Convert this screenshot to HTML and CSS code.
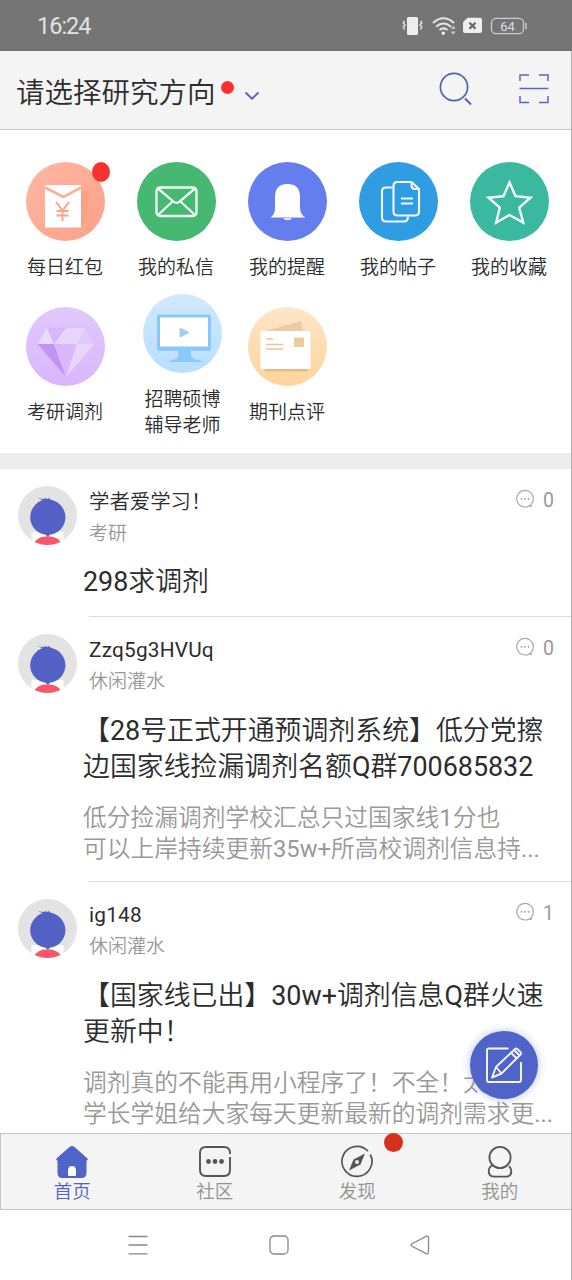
FILE: index.html
```html
<!DOCTYPE html>
<html lang="zh-CN">
<head>
<meta charset="utf-8">
<title>首页</title>
<link rel="stylesheet" href="styles.css">
</head>
<body>
<svg class="defs" width="0" height="0">
  <defs>
    <linearGradient id="g-red" x1="0" y1="0" x2="1" y2="1"><stop offset="0" stop-color="#ffb8a2"/><stop offset="1" stop-color="#ff9f88"/></linearGradient>
    <linearGradient id="g-purple" x1="0" y1="0" x2="0" y2="1"><stop offset="0" stop-color="#e0c9fd"/><stop offset="1" stop-color="#d8b6fb"/></linearGradient>
    <linearGradient id="g-blue" x1="0" y1="0" x2="0" y2="1"><stop offset="0" stop-color="#d0e9ff"/><stop offset="1" stop-color="#b8dfff"/></linearGradient>
    <linearGradient id="g-orange" x1="0" y1="0" x2="0" y2="1"><stop offset="0" stop-color="#fde6c9"/><stop offset="1" stop-color="#fed49b"/></linearGradient>
    <clipPath id="avatar-clip"><circle cx="29.5" cy="29.5" r="29.5"/></clipPath>
    <symbol id="avatar" viewBox="0 0 59 59">
      <g clip-path="url(#avatar-clip)">
        <rect width="59" height="59" fill="#e3e3e3"/>
        <path d="M13.500 46h32v13h-32z" fill="#fff"/>
        <circle cx="29.800" cy="31.200" r="17.600" fill="#5361c5"/>
        <path d="M19.500 12.500l8 .6-2-1.600 4.500 1.400.8-1.400.9 1.800 6 3-13 2-5.500-1.200 5.500-3.200z" fill="#5361c5"/>
        <path d="M27 48h5.500l-2.700 3z" fill="#5361c5"/>
        <path d="M16 57q3-5 9-6.200q5-1 10 .1q6 1.500 8 6.100v2H16z" fill="#f8566a"/>
      </g>
    </symbol>
    <symbol id="comment" viewBox="0 0 20 20">
      <path d="M14.200 16.900A8.300 8.300 0 1 0 10 18q2.300 0 4.200-1.100l2 .6-.4-2" fill="none" stroke="#aaa" stroke-width="1.200"/>
      <g fill="#999"><circle cx="6.500" cy="9.800" r=".9"/><circle cx="10" cy="9.800" r=".9"/><circle cx="13.500" cy="9.800" r=".9"/></g>
    </symbol>
  </defs>
</svg>

<div class="screen">
  <header class="status">
    <span class="clock">16:24</span>
    <svg width="126" height="24" viewBox="0 0 126 24">
      <g fill="#eee">
        <rect x="5" y="3" width="11" height="18" rx="1.500"/>
        <path d="M2.500 7l-1.200 2 1.700 2-1.700 2 1.200 2.500M18.500 7l1.200 2-1.700 2 1.700 2-1.200 2.500" fill="none" stroke="#ddd" stroke-width="1.600"/>
        <path d="M31 9Q41.500-.5 52 9M34 12.700q7.500-6.400 15 0M37.500 16q4-3.300 8 0" fill="none" stroke="#e4e4e4" stroke-width="2.100"/>
        <circle cx="41.300" cy="19.300" r="1.700"/>
        <path d="M48.700 14.700l2.500-3 2.500 3zm0 2.800h5l-2.500 3z" fill="#ccc"/>
        <path d="M65.500 3.800H78q2 0 2 2V17q0 2-2 2H63q-2 0-2-2V8.300z"/>
      </g>
      <path d="M67.500 8.700l6 6m0-6l-6 6" stroke="#666" stroke-width="2.200"/>
      <rect x="89.500" y="4.300" width="32" height="15.400" rx="4.500" fill="none" stroke="#ccc" stroke-width="1.300"/>
      <path d="M124 9v6" stroke="#ccc" stroke-width="1.500"/>
      <text class="battery" x="105.500" y="16.500" text-anchor="middle">64</text>
    </svg>
  </header>

  <div class="topbar">
    <span class="direction">请选择研究方向</span>
    <i class="dot"></i>
    <svg class="chevron" width="16" height="12" viewBox="0 0 16 12"><path d="M1.500 2.500L8 8.700l6.500-6.200" fill="none" stroke="#5361bd" stroke-width="1.800"/></svg>
    <svg class="search" width="36" height="36" viewBox="0 0 36 36" fill="none" stroke="#5361b0"><circle cx="17" cy="17" r="13.600" stroke-width="1.700"/><path d="M28 28.500l6 6" stroke-width="1.900"/></svg>
    <svg class="scan" width="30" height="30" viewBox="0 0 30 30" fill="none" stroke="#5868b8" stroke-width="1.500"><path d="M1 7V1h9M20 1h9v6M29 22v6.500h-9M10 28.500H1V22M.5 14.500h29"/></svg>
  </div>

  <nav class="grid">
    <a class="entry">
      <svg class="disc" viewBox="0 0 79 79"><circle cx="39.500" cy="39.500" r="39.500" fill="url(#g-red)"/>
        <path d="M55 27l9 3-4 28-5 7z" fill="#f99a80" opacity=".55"/>
        <path d="M19 23h36v42.500H19z" fill="#fff"/>
        <path d="M19 25.500l18.500 9.500L55 25.500" fill="none" stroke="#fbb09a" stroke-width="2.600"/>
        <path d="M30 40l6.500 8.500L43 40M36.500 48.500V59M30.500 49h12M30.500 53.500h12" fill="none" stroke="#f9a58c" stroke-width="2"/></svg>
      <i class="badge"></i>
      <span class="label">每日红包</span>
    </a>
    <a class="entry">
      <svg class="disc" viewBox="0 0 79 79"><circle cx="39.500" cy="39.500" r="39.500" fill="#46b871"/>
        <g fill="none" stroke="#f0fff4" stroke-width="2.300" stroke-linejoin="round"><rect x="19.500" y="25.500" width="40" height="28.500" rx="3.500"/><path d="M21 26.500l15.500 13.200q3 2.400 6 0L58 26.500M21 53l14.500-13.500M58 53L43.500 39.500"/></g></svg>
      <span class="label">我的私信</span>
    </a>
    <a class="entry">
      <svg class="disc" viewBox="0 0 79 79"><circle cx="39.500" cy="39.500" r="39.500" fill="#647eee"/>
        <path d="M22.500 55.500q4.500-3 4.500-10V35q0-13 12.500-13T52 35v10.500q0 7 5.500 10z" fill="#fff"/><path d="M35 56h9q-1 2.300-4.500 2.300T35 56z" fill="#dfe7ff"/></svg>
      <span class="label">我的提醒</span>
    </a>
    <a class="entry">
      <svg class="disc" viewBox="0 0 79 79"><circle cx="39.500" cy="39.500" r="39.500" fill="#309ce2"/>
        <g fill="none" stroke="#f2faff" stroke-width="2.100" stroke-linejoin="round"><path d="M33.500 25.500H27q-4 0-4 4v26q0 4 4 4h18q4 0 4-5"/><path d="M52.500 20H38.500q-4 0-4 4v25.500q0 4 4 4H56q4 0 4-4V27z"/><path d="M52.500 20v3.500q0 3.500 3.500 3.500h4"/><path d="M42 36.500h12M42 41.500h12"/></g></svg>
      <span class="label">我的帖子</span>
    </a>
    <a class="entry">
      <svg class="disc" viewBox="0 0 79 79"><circle cx="39.500" cy="39.500" r="39.500" fill="#3ab9a0"/>
        <path d="M39.500 20.500l6 13.700 15 1.500-11.300 10 4 14.800-13.700-7.500-13.400 7.500 3.700-14.800-11.300-10 15-1.500z" fill="none" stroke="#f4fffc" stroke-width="2.400"/></svg>
      <span class="label">我的收藏</span>
    </a>
    <a class="entry">
      <svg class="disc" viewBox="0 0 79 79"><circle cx="39.500" cy="39.500" r="39.500" fill="url(#g-purple)"/>
        <path d="M11.500 37L21 21h38l9.500 16L40 70z" fill="#dfc0fc"/>
        <path d="M11.500 37L21 21l7 16z" fill="#ead8fd"/><path d="M21 21h19L28 37z" fill="#d9b6fb"/><path d="M28 37l12-16h19l-8 16z" fill="#e8d5fd"/><path d="M59 21l9.500 16H51z" fill="#e2c8fc"/>
        <path d="M11.500 37H28l12 33z" fill="#c293f5"/><path d="M28 37h23L40 70z" fill="#dab8fb"/><path d="M51 37h17.500L40 70z" fill="#e8d5fd"/></svg>
      <span class="label">考研调剂</span>
    </a>
    <a class="entry entry-tall">
      <svg class="disc" viewBox="0 0 79 79"><circle cx="39.500" cy="39.500" r="39.500" fill="url(#g-blue)"/>
        <path d="M35 56h13v6q1 3 4 3.500 6 .5 8 2.500H25q2-2 6-2.500 4-.5 4-3.500z" fill="#8cc8fa"/>
        <rect x="15.500" y="22" width="51" height="33" rx="1" fill="#fff" stroke="#8ac8fb" stroke-width="3"/><path d="M15 54.500h52" stroke="#8ac8fb" stroke-width="4"/>
        <path d="M37 34l9 4.500-9 4.500z" fill="#9ecff8" stroke="#9ecff8" stroke-linejoin="round"/></svg>
      <span class="label">招聘硕博<br>辅导老师</span>
    </a>
    <a class="entry">
      <svg class="disc" viewBox="0 0 79 79"><circle cx="39.500" cy="39.500" r="39.500" fill="url(#g-orange)"/>
        <path d="M17 24l36-10 3 14H15z" fill="#e9ccaa"/><path d="M13 60h49l-3 4.500H18z" fill="#ecb97c"/>
        <rect x="12.500" y="24" width="50" height="38" rx="1.500" fill="#fff"/><rect x="46" y="30.500" width="10" height="9.500" fill="#ebcaa2"/>
        <path d="M18 32h7M18 37.500h17.500M18 42h17.500" stroke="#e6c69d" stroke-width="1.300"/></svg>
      <span class="label">期刊点评</span>
    </a>
  </nav>

  <main class="feed">
    <article class="post">
      <div class="head"><svg class="avatar"><use href="#avatar"/></svg>
        <div class="who"><div class="name">学者爱学习！</div><div class="cat">考研</div></div>
        <div class="count"><svg width="20" height="20"><use href="#comment"/></svg><span>0</span></div></div>
      <div class="body"><h2><b>298</b>求调剂</h2></div>
    </article>
    <article class="post">
      <div class="head"><svg class="avatar"><use href="#avatar"/></svg>
        <div class="who"><div class="name latin">Zzq5g3HVUq</div><div class="cat">休闲灌水</div></div>
        <div class="count"><svg width="20" height="20"><use href="#comment"/></svg><span>0</span></div></div>
      <div class="body"><h2>【<b>28</b>号正式开通预调剂系统】低分党擦<br>边国家线捡漏调剂名额<b>Q</b>群<b>700685832</b></h2>
        <p>低分捡漏调剂学校汇总只过国家线<b>1</b>分也<br>可以上岸持续更新<b>35w+</b>所高校调剂信息持<b>...</b></p></div>
    </article>
    <article class="post">
      <div class="head"><svg class="avatar"><use href="#avatar"/></svg>
        <div class="who"><div class="name latin">ig148</div><div class="cat">休闲灌水</div></div>
        <div class="count"><svg width="20" height="20"><use href="#comment"/></svg><span>1</span></div></div>
      <div class="body"><h2>【国家线已出】<b>30w+</b>调剂信息<b>Q</b>群火速<br>更新中！</h2>
        <p>调剂真的不能再用小程序了！不全！太<br>学长学姐给大家每天更新最新的调剂需求更<b>...</b></p></div>
    </article>
    <button class="compose" aria-label="发帖"><svg width="68" height="68" viewBox="0 0 68 68" fill="none" stroke="#f5f7ff" stroke-width="1.900" stroke-linejoin="round"><path d="M38.500 17.500H19q-2 0-2 2V49q0 2 2 2h30q2 0 2-2V31"/><path d="M22 46.500l4-10.500 19-18q1-1 2.300 0l3.200 3.200q1 1.200 0 2.300L31.500 42.500zM26 36l5.500 6.500M41 21.700l5.700 5.800M44 19l5.500 5.500"/></svg></button>
  </main>

  <nav class="tabs">
    <a class="tab active"><svg width="34" height="34" viewBox="0 0 34 34"><path d="M14.200 2.200q2.800-2.300 5.600 0L32.500 13.500q1 1.500-1 2V28q0 5-5 5h-19q-5 0-5-5V15.500q-2-.5-1-2z" fill="#4f63c9"/><path d="M13 31v-5.500q0-4.500 4-4.500t4 4.500V31z" fill="#fff"/></svg><span>首页</span></a>
    <a class="tab"><svg width="34" height="34" viewBox="0 0 34 34"><path d="M32 9V8q0-6-6-6H8Q2 2 2 8v17q0 6 6 6h18q6 0 6-6V12" fill="none" stroke="#555" stroke-width="1.900"/><g fill="#555"><circle cx="10.500" cy="16.500" r="2.400"/><circle cx="17" cy="16.500" r="2.400"/><circle cx="23.500" cy="16.500" r="2.400"/></g></svg><span>社区</span></a>
    <a class="tab"><svg width="34" height="34" viewBox="0 0 34 34"><path d="M28 6.200A15 15 0 1 0 30.300 9.500" fill="none" stroke="#555" stroke-width="1.700"/><path d="M25 8.500l-4.500 11-11.500 6 4.500-11z" fill="#555"/><circle cx="17" cy="17" r="2" fill="#f4f4f4"/></svg><i class="tab-dot"></i><span>发现</span></a>
    <a class="tab"><svg width="34" height="34" viewBox="0 0 34 34" fill="none" stroke="#555" stroke-width="1.800"><circle cx="17" cy="12.500" r="10.600"/><path d="M9.500 20.200Q5.700 22 5.700 26.200q0 5.500 6 5.500h10.600q6 0 6-5.500 0-3-2.300-5"/></svg><span>我的</span></a>
  </nav>

  <footer class="sysnav">
    <svg width="20" height="22" viewBox="0 0 20 22"><path d="M.5 2.500h19M.5 11h19M.5 19.800h19" stroke="#888" stroke-width="1.300"/></svg>
    <svg width="20" height="20" viewBox="0 0 20 20"><rect x="1" y="1" width="18" height="18" rx="4" fill="none" stroke="#888" stroke-width="1.300"/></svg>
    <svg width="20" height="20" viewBox="0 0 20 20"><path d="M16.500 1.200L2 8.700q-1.800 1.300 0 2.600l14.500 7.500q2 .5 2-1.500V2.700q0-2-2-1.500z" fill="none" stroke="#888" stroke-width="1.300"/></svg>
  </footer>
</div>
</body>
</html>
```

FILE: styles.css
```css
* { box-sizing: border-box; }
body {
  margin: 0;
  background: #fff;
  font-family: Roboto, "Noto Sans CJK SC", sans-serif;
  font-weight: 350;
  color: #2c2c2c;
}
svg { display: block; flex: none; }
/* Latin runs are a step heavier than the Chinese text */
b { font-weight: 400; }
.defs { position: absolute; }
.screen {
  position: relative;
  width: 572px;
  height: 1280px;
  display: flex;
  flex-direction: column;
  overflow: hidden;
}
.screen::after {
  content: "";
  position: absolute;
  top: 51px;
  right: 0;
  bottom: 0;
  width: 1px;
  background: #b0b0b0;
}
.status {
  flex: none;
  height: 51px;
  padding: 0 44px 0 37px;
  display: flex;
  align-items: center;
  justify-content: space-between;
  background: #757575;
}
.clock { font: 400 23.500px Roboto, sans-serif; letter-spacing: -1px; color: #e2e2e2; }
.battery { font: 400 13px Roboto, sans-serif; fill: #ddd; }
.topbar {
  flex: none;
  height: 79px;
  display: flex;
  align-items: center;
  padding: 0 23px 0 16px;
  background: #f4f4f4;
  border-bottom: 1px solid #c6c6c6;
}
.direction { font-size: 28.500px; line-height: 40px; margin-top: 7px; white-space: nowrap; }
.dot { width: 13px; height: 13px; margin: -6px 0 0 5px; border-radius: 50%; background: #fb302e; }
.chevron { margin: 11px 0 0 10px; }
.search { margin-left: auto; margin-top: -4px; }
.scan { margin: -3px 0 0 46px; }
.grid {
  flex: none;
  height: 323px;
  padding: 32px 0 0 9.500px;
  display: grid;
  grid-template-columns: repeat(5, 111px);
  grid-template-rows: 145px 146px;
  align-items: start;
}
.entry { position: relative; display: flex; flex-direction: column; align-items: center; }
.entry-tall { margin: -13px 0 0 13px; }
.disc { width: 79px; height: 79px; }
.label { margin-top: 14px; font-size: 19px; line-height: 26px; white-space: nowrap; }
.badge { position: absolute; top: 0; left: 82px; width: 18px; height: 20px; border-radius: 50%; background: #f9322f; }
.feed {
  position: relative;
  height: 680px;
  flex: none;
  border-top: 16px solid #ededed;
  overflow: hidden;
}
.post { position: relative; padding: 17px 18px 16px 17.500px; }
.post + .post { padding-top: 18px; }
.post + .post::before { content: ""; position: absolute; top: 0; left: 89px; right: 0; height: 1px; background: #ddd; }
.head { display: flex; height: 64px; }
.avatar { width: 59px; height: 59px; }
.who { margin-left: 12.500px; flex: 1; }
.name { font-size: 20.400px; line-height: 32px; height: 32px; }
.latin { font-size: 20.800px; font-weight: 400; letter-spacing: .2px; }
.cat { font-size: 19px; line-height: 32px; color: #999; }
.count { display: flex; gap: 8px; height: 28px; align-items: center; font-size: 19.500px; font-weight: 400; color: #999; }
.count svg { margin-top: -3px; }
.body { margin: 14px 0 0 65.500px; white-space: nowrap; text-spacing-trim: space-all; }
.post + .post .body { margin-top: 15px; }
h2 { margin: 0; font-size: 26.900px; line-height: 36px; font-weight: 350; }
p { margin: 18px 0 0; font-size: 23.750px; line-height: 31px; color: #999; }
.compose {
  position: absolute;
  left: 470px;
  top: 562px;
  width: 68px;
  height: 68px;
  padding: 0;
  border: 0;
  border-radius: 50%;
  background: #4f63c8;
  box-shadow: 0 0 8px rgba(79, 99, 200, .4);
}
.tabs {
  flex: none;
  height: 77px;
  display: grid;
  grid-template-columns: repeat(4, 1fr);
  background: #f4f4f4;
  border: 1px solid #c4c4c4;
}
.tab { position: relative; display: flex; flex-direction: column; align-items: center; padding-top: 11px; font-size: 18.500px; line-height: 27px; color: #929292; }
.tab.active { color: #4f63c8; }
.tab-dot { position: absolute; left: 98px; top: -1px; width: 19px; height: 19px; border-radius: 50%; background: #d5311d; }
.sysnav { flex: none; height: 70px; display: flex; align-items: center; gap: 121px; padding-left: 128px; }
```
